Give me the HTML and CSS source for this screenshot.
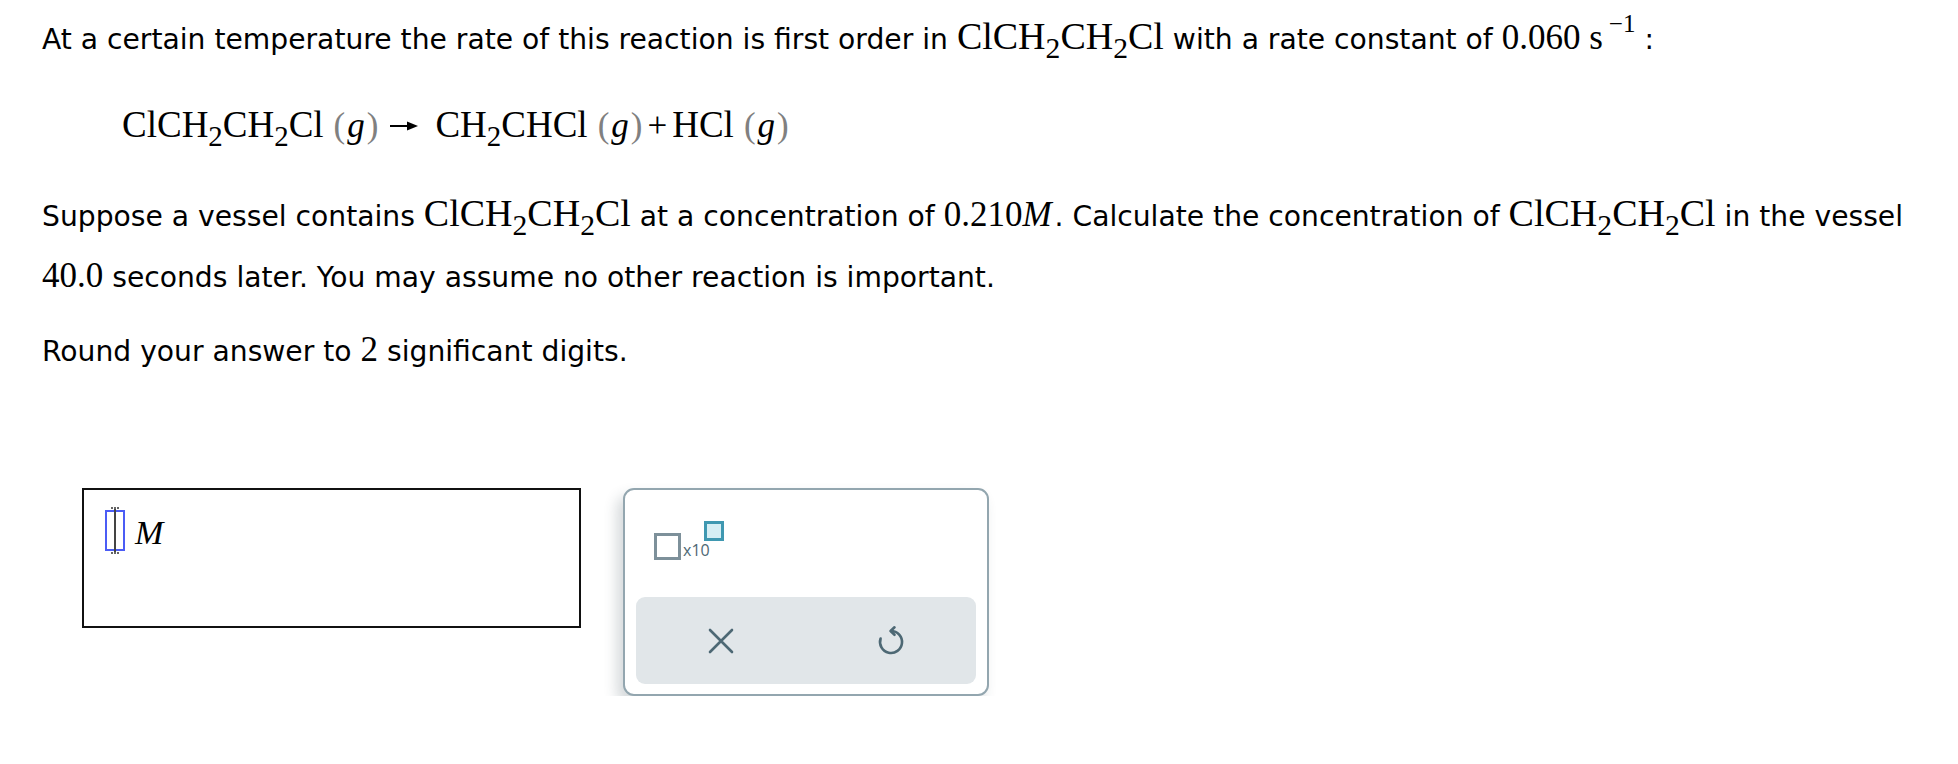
FILE: index.html
```html
<!DOCTYPE html>
<html lang="en">
<head>
<meta charset="utf-8">
<title>First order reaction</title>
<link rel="stylesheet" href="styles.css">
</head>
<body>
<div class="page">
  <p class="q1">At a certain temperature the rate of this reaction is first order in <span class="chem">ClCH<sub>2</sub>CH<sub>2</sub>Cl</span> with a rate constant of <span class="m">0.060 s<sup>−1</sup></span>:</p>

  <div class="eq">
    <span class="chem">ClCH<sub>2</sub>CH<sub>2</sub>Cl</span><span class="state"><span class="par">(</span><i>g</i><span class="par">)</span></span><svg class="arrow" width="30" height="12" viewBox="0 0 30 12"><line x1="1" y1="6" x2="20" y2="6" stroke="#000" stroke-width="2"/><polygon points="18,1.5 29,6 18,10.5" fill="#000"/></svg><span class="chem">CH<sub>2</sub>CHCl</span><span class="state"><span class="par">(</span><i>g</i><span class="par">)</span></span><span class="plus">+</span><span class="chem">HCl</span><span class="state"><span class="par">(</span><i>g</i><span class="par">)</span></span>
  </div>

  <p class="p2">Suppose a vessel contains <span class="chem">ClCH<sub>2</sub>CH<sub>2</sub>Cl</span> at a concentration of <span class="m">0.210<i>M</i></span>. Calculate the concentration of <span class="chem">ClCH<sub>2</sub>CH<sub>2</sub>Cl</span> in the vessel<br><span class="m">40.0</span> seconds later. You may assume no other reaction is important.</p>

  <p class="p3">Round your answer to <span class="m">2</span> significant digits.</p>

  <div class="answer-row">
    <div class="answer-box">
      <span class="cursor"></span>
      <i class="unit">M</i>
    </div>
    <div class="keypad">
      <div class="keys">
        <div class="x10">
          <span class="sq-big"></span>
          <span class="x10-text">x10</span>
          <span class="sq-small"></span>
        </div>
      </div>
      <div class="actions">
        <button class="act" aria-label="clear">
          <svg width="26" height="26" viewBox="0 0 26 26"><path d="M2 2 L24 24 M24 2 L2 24" stroke="#4d6874" stroke-width="2.6" stroke-linecap="round" fill="none"/></svg>
        </button>
        <button class="act" aria-label="undo">
          <svg width="32" height="32" viewBox="0 0 32 32"><path d="M16 6 A11 11 0 1 1 5.6 13.5" stroke="#4d6874" stroke-width="2.6" stroke-linecap="round" fill="none"/><path d="M19.5 2.3 L15.6 6 L19.5 9.8" stroke="#4d6874" stroke-width="2.6" stroke-linecap="round" stroke-linejoin="round" fill="none"/></svg>
        </button>
      </div>
    </div>
  </div>
</div>
</body>
</html>
```

FILE: styles.css
```css
html, body {
  margin: 0;
  padding: 0;
  background: #fff;
}

body {
  font-family: "DejaVu Sans", Verdana, sans-serif;
  font-size: 28.2px;
  color: #000;
}

.page {
  padding: 20px 0 0 42px;
}

.q1 {
  margin: 0;
  line-height: 40px;
  white-space: nowrap;
}

.m,
.chem {
  font-family: "Liberation Serif", "Times New Roman", serif;
  line-height: 0;
}

.m {
  font-size: 35px;
}

.chem {
  font-size: 38px;
}

.chem sub {
  font-size: 0.78em;
  vertical-align: -0.3em;
  line-height: 0;
}

.m sup {
  font-size: 25px;
  line-height: 0;
  vertical-align: 17px;
  margin-left: 6px;
  margin-right: 9px;
}

.m i {
  font-style: italic;
  margin-right: 3px;
}

.eq {
  margin-top: 46px;
  padding-left: 80px;
  font-family: "Liberation Serif", "Times New Roman", serif;
  font-size: 35px;
  line-height: 40px;
  white-space: nowrap;
  display: flex;
  align-items: baseline;
}

.eq .chem {
  font-size: 37px;
}

.eq .state {
  margin-left: 10px;
}

.eq .par {
  color: #808080;
}

.eq .state i {
  padding: 0 2px;
}

.eq .arrow {
  margin: 0 16px 0 11px;
  align-self: center;
}

.eq .plus {
  margin: 0 5px 0 5px;
}

.p2 {
  margin: 40px 0 0;
  line-height: 61px;
  white-space: nowrap;
}

.p3 {
  margin: 24px 0 0;
  line-height: 40px;
}

.answer-row {
  margin-top: 116px;
  padding-left: 40px;
  display: flex;
  align-items: flex-start;
  gap: 42px;
}

.answer-box {
  box-sizing: border-box;
  width: 499px;
  height: 140px;
  border: 2px solid #111;
  padding: 20px 0 0 21px;
  display: flex;
  align-items: flex-start;
  gap: 10px;
}

.cursor {
  position: relative;
  box-sizing: border-box;
  width: 20px;
  height: 41px;
  border: 2px solid #4b5cf5;
}

.cursor::before {
  content: "";
  position: absolute;
  left: 7px;
  top: -4px;
  width: 2px;
  height: 45px;
  background: #444;
}

.cursor::after {
  content: "";
  position: absolute;
  left: 4px;
  top: -5px;
  width: 8px;
  height: 43px;
  border-top: 2px dotted #666;
  border-bottom: 2px dotted #666;
}

.unit {
  font-family: "Liberation Serif", "Times New Roman", serif;
  font-size: 34px;
  line-height: 1;
  margin-top: 6px;
}

.keypad {
  box-sizing: border-box;
  width: 366px;
  height: 208px;
  border: 2px solid #93a6af;
  border-radius: 11px;
  background: #fff;
  box-shadow: -6px 8px 14px rgba(40, 60, 70, 0.2);
  display: flex;
  flex-direction: column;
}

.keys {
  flex: 1;
  padding: 31px 0 0 29px;
}

.x10 {
  display: flex;
  align-items: flex-end;
  height: 39px;
}

.sq-big {
  box-sizing: border-box;
  width: 27px;
  height: 27px;
  border: 3px solid #7d909a;
}

.x10-text {
  font-family: "Open Sans", "DejaVu Sans", sans-serif;
  font-size: 16px;
  line-height: 1;
  color: #4d6874;
  margin-left: 2px;
  margin-bottom: 2px;
}

.sq-small {
  align-self: flex-start;
  box-sizing: border-box;
  width: 20px;
  height: 20px;
  border: 3px solid #3f98b1;
  background: #d6eef4;
  margin-left: -6px;
}

.actions {
  height: 87px;
  margin: 0 11px 10px;
  background: #e1e6e9;
  border-radius: 9px;
  display: grid;
  grid-template-columns: 1fr 1fr;
}

.act {
  border: 0;
  background: transparent;
  padding: 0;
  display: flex;
  align-items: center;
  justify-content: center;
}
```
